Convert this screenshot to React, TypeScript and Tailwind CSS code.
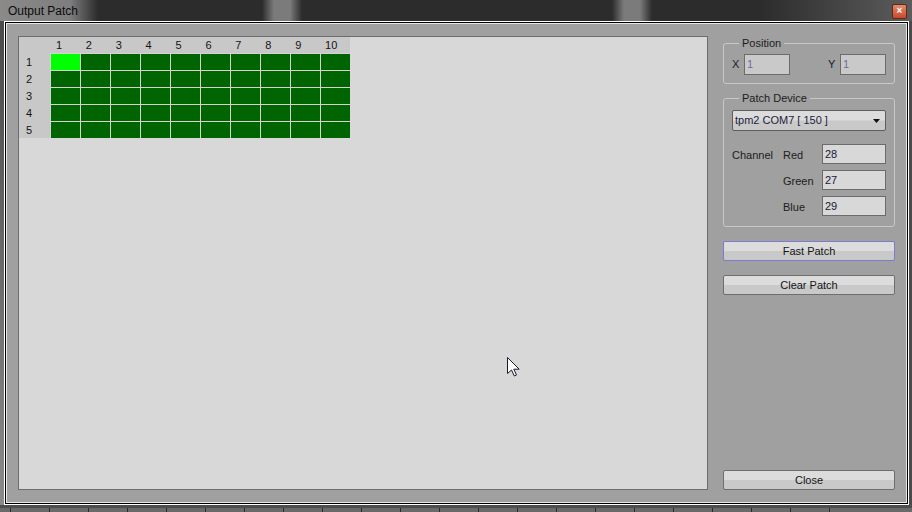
const cols = ["1", "2", "3", "4", "5", "6", "7", "8", "9", "10"];
const rows = ["1", "2", "3", "4", "5"];

const btnBg =
  "bg-[linear-gradient(to_bottom,#dcdcdc_0%,#dcdcdc_48%,#c9c9c9_52%,#c9c9c9_100%)]";

const TextBox = ({ value, dim }: { value: string; dim?: boolean }) => {
  return (
    <div
      className={
        dim
          ? "flex h-[21px] w-[46px] items-center border border-[#6b6b6b] bg-[#c9c9c9] pl-[2px] text-[#6e6e92]"
          : "flex h-[20px] w-full items-center border border-[#6b6b6b] bg-[#d8d8d8] pl-[2px] text-[#16163a]"
      }
    >
      {value}
    </div>
  );
};

const Button = ({ label, focused }: { label: string; focused?: boolean }) => {
  return (
    <div
      className={
        (focused ? "border-[#7b7bd2] " : "border-[#6e6e6e] ") +
        "flex h-[20px] w-full items-center justify-center rounded-[2px] border text-[#141414] " +
        btnBg
      }
    >
      {label}
    </div>
  );
};

const PatchGrid = () => {
  return (
    <div className="w-[331px] bg-[#c8c8c8] text-[#141414]">
      <div className="flex h-[16px] leading-[16px]">
        <div className="w-[32px]" />
        {cols.map((c) => (
          <div key={c} className="w-[30px] pl-[5px]">
            {c}
          </div>
        ))}
      </div>
      <div className="flex">
        <div className="flex w-[31px] flex-col gap-px pt-px">
          {rows.map((r) => (
            <div key={r} className="h-[16px] pl-[7px] leading-[16px]">
              {r}
            </div>
          ))}
        </div>
        <div className="grid grid-cols-[repeat(10,29px)] gap-px bg-[#d4d4d4] pl-px pt-px">
          {rows.map((r, ri) =>
            cols.map((c, ci) => (
              <div
                key={r + "-" + c}
                className={
                  ri === 0 && ci === 0
                    ? "h-[16px] bg-[#00ff00]"
                    : "h-[16px] bg-[#006400]"
                }
              />
            ))
          )}
        </div>
      </div>
    </div>
  );
};

const SidePanel = () => {
  return (
    <div className="flex w-[172px] flex-col text-[#1c1c1c]">
      <fieldset className="rounded-[3px] border border-[#c8c8c8] px-[8px] pb-[8px] pt-[4px]">
        <legend className="ml-[7px] px-[3px] leading-[14px]">Position</legend>
        <div className="flex items-center">
          <div className="w-[12px]">X</div>
          <TextBox value="1" dim />
          <div className="flex-1" />
          <div className="w-[12px]">Y</div>
          <TextBox value="1" dim />
        </div>
      </fieldset>

      <fieldset className="mt-[7px] rounded-[3px] border border-[#c8c8c8] px-[8px] pb-[10px] pt-[5px]">
        <legend className="ml-[7px] px-[3px] leading-[14px]">Patch Device</legend>
        <div
          className={
            "flex h-[21px] items-center justify-between rounded-[2px] border border-[#5e5e5e] pl-[2px] pr-[5px] text-[#1e1e3c] " +
            btnBg
          }
        >
          <span>tpm2 COM7 [ 150 ]</span>
          <svg width="7" height="4" viewBox="0 0 7 4">
            <path d="M0 0h7L3.5 4z" fill="#111" />
          </svg>
        </div>
        <div className="mt-[13px] grid grid-cols-[51px_39px_64px] items-center gap-y-[6px]">
          <div className="pt-[2px]">Channel</div>
          <div className="pt-[2px]">Red</div>
          <TextBox value="28" />
          <div />
          <div className="pt-[2px]">Green</div>
          <TextBox value="27" />
          <div />
          <div className="pt-[2px]">Blue</div>
          <TextBox value="29" />
        </div>
      </fieldset>

      <div className="mt-[14px]">
        <Button label="Fast Patch" focused />
      </div>
      <div className="mt-[14px]">
        <Button label="Clear Patch" />
      </div>
      <div className="mt-auto">
        <Button label="Close" />
      </div>
    </div>
  );
};

export default function App() {
  return (
    <div className="relative flex h-[512px] w-[912px] flex-col overflow-hidden bg-[#2b2b2b] font-['Liberation_Sans',Arial,sans-serif] text-[11px]">
      {/* title bar */}
      <div className="flex h-[21px] items-center justify-between bg-[linear-gradient(to_right,#8a8a8a_0px,#7e7e7e_70px,#2c2c2c_98px,#2c2c2c_262px,#7b7b7b_274px,#7b7b7b_290px,#2c2c2c_302px,#2c2c2c_612px,#7b7b7b_624px,#7b7b7b_640px,#2c2c2c_652px,#2c2c2c_760px,#5c5c5c_912px)] pl-[8px] pr-[5px]">
        <span className="text-[12px] text-[#0c0c0c]">Output Patch</span>
        <div className="mt-px flex h-[15px] w-[15px] items-center justify-center rounded-[2px] border border-[#5a2a1a] bg-[linear-gradient(to_bottom,#e48a6a,#c8482a)] text-[10px] font-bold leading-none text-white">
          ×
        </div>
      </div>

      <div className="flex">
        <div className="w-[4px] bg-[linear-gradient(to_bottom,#4a4a4a,#8a8a8a)]" />
        {/* window frame */}
        <div className="h-[484px] w-[905px] border border-white">
          <div className="h-full w-full border border-black">
            <div className="h-full w-full border border-[#e6e6e6]">
              <div className="flex h-full gap-[15px] bg-[#a0a0a0] pb-[12px] pl-[11px] pr-[10px] pt-[12px]">
                <div className="h-full w-[690px] border border-[#6d6d6d] bg-[#d8d8d8]">
                  <PatchGrid />
                </div>
                <SidePanel />
              </div>
            </div>
          </div>
        </div>
        <div className="w-[3px] bg-[#4a4a4a]" />
      </div>

      {/* strip of taskbar below */}
      <div className="flex flex-1 items-end bg-[#4e4e4e]">
        <div className="flex h-[4px] w-full gap-[38px] bg-[#6a6a6a] pl-[10px]">
          {Array.from({ length: 22 }).map((_, i) => (
            <div key={i} className="h-full w-px bg-[#2a2a40]" />
          ))}
        </div>
      </div>

      {/* mouse cursor */}
      <svg
        className="absolute left-[507px] top-[357px]"
        width="13"
        height="20"
        viewBox="0 0 13 20"
      >
        <path
          d="M0.5 0.5v16l4-3.5 2.8 6 2.2-1-2.7-5.8h5.4z"
          fill="#fff"
          stroke="#1a1a2a"
          strokeWidth="1"
          strokeLinejoin="round"
        />
      </svg>
    </div>
  );
}
